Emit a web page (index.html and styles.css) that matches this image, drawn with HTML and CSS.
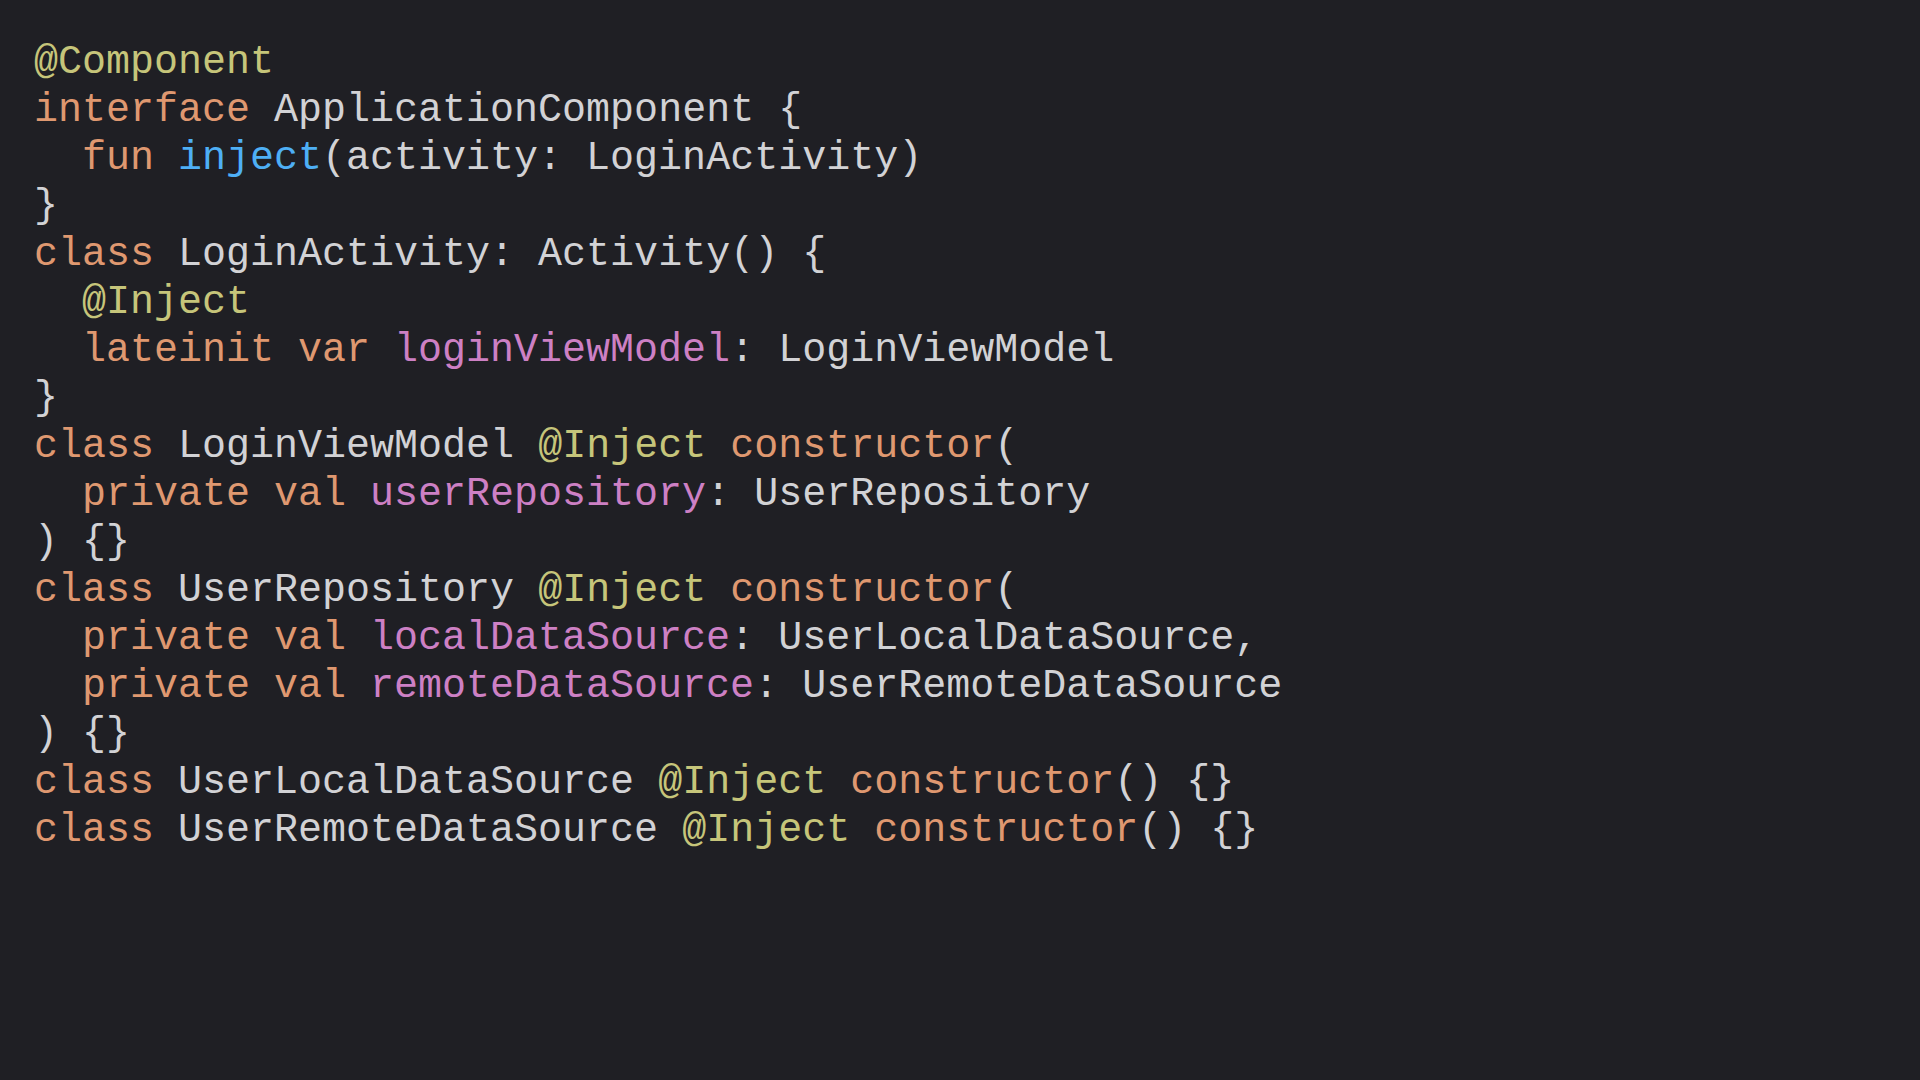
FILE: index.html
```html
<!DOCTYPE html>
<html>
<head>
<meta charset="utf-8">
<link rel="stylesheet" href="styles.css">
</head>
<body>
<div class="code">
<div class="ln"><span class="an">@Component</span></div>
<div class="ln"><span class="kw">interface</span> <span>ApplicationComponent {</span></div>
<div class="ln in"><span class="kw">fun</span> <span class="fn">inject</span><span>(activity: LoginActivity)</span></div>
<div class="ln"><span>}</span></div>
<div class="ln"><span class="kw">class</span> <span>LoginActivity: Activity() {</span></div>
<div class="ln in"><span class="an">@Inject</span></div>
<div class="ln in"><span class="kw">lateinit var</span> <span class="pr">loginViewModel</span><span>: LoginViewModel</span></div>
<div class="ln"><span>}</span></div>
<div class="ln"><span class="kw">class</span> <span>LoginViewModel</span> <span class="an">@Inject</span> <span class="kw">constructor</span><span>(</span></div>
<div class="ln in"><span class="kw">private val</span> <span class="pr">userRepository</span><span>: UserRepository</span></div>
<div class="ln"><span>) {}</span></div>
<div class="ln"><span class="kw">class</span> <span>UserRepository</span> <span class="an">@Inject</span> <span class="kw">constructor</span><span>(</span></div>
<div class="ln in"><span class="kw">private val</span> <span class="pr">localDataSource</span><span>: UserLocalDataSource,</span></div>
<div class="ln in"><span class="kw">private val</span> <span class="pr">remoteDataSource</span><span>: UserRemoteDataSource</span></div>
<div class="ln"><span>) {}</span></div>
<div class="ln"><span class="kw">class</span> <span>UserLocalDataSource</span> <span class="an">@Inject</span> <span class="kw">constructor</span><span>() {}</span></div>
<div class="ln"><span class="kw">class</span> <span>UserRemoteDataSource</span> <span class="an">@Inject</span> <span class="kw">constructor</span><span>() {}</span></div>
</div>
</body>
</html>
```
FILE: styles.css
```css
html, body {
  margin: 0;
  padding: 0;
  background: #1f1f24;
  height: 100%;
}
.code {
  display: flex;
  flex-direction: column;
  padding: 39px 34px;
  font-family: "Liberation Mono", "Courier New", monospace;
  font-size: 40px;
  line-height: 48px;
  color: #d2d2d5;
}
.ln {
  white-space: pre;
  height: 48px;
}
.in {
  padding-left: 48px;
}
.kw { color: #df9870; }
.an { color: #c6c57a; }
.fn { color: #4eaff5; }
.pr { color: #cd80c4; }
```
